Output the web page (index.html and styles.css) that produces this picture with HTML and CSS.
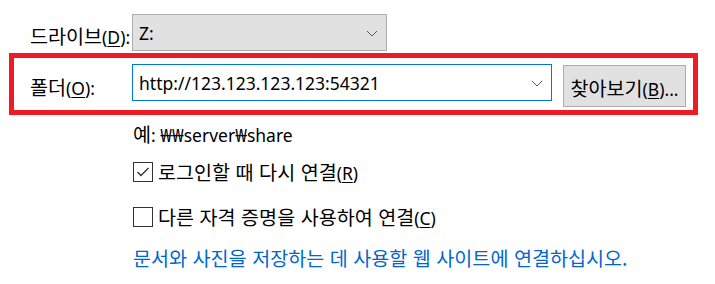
FILE: index.html
```html
<!DOCTYPE html>
<html lang="ko">
<head>
    <meta charset="UTF-8">
    <title>네트워크 드라이브 연결</title>
    <link rel="stylesheet" href="styles.css">
</head>
<body>

<div class="dialog">
    <div class="row drive-row">
        <label class="label">드라이브<span class="latin">(<u>D</u>):</span></label>
        <div class="combo drive-combo">
            <span class="latin">Z:</span>
            <svg class="chevron" width="12" height="7" viewBox="0 0 12 7"><path d="M1 1 L6 6 L11 1" fill="none" stroke="#5a5a5a" stroke-width="1"/></svg>
        </div>
    </div>

    <div class="row folder-row">
        <label class="label">폴더<span class="latin">(<u>O</u>):</span></label>
        <div class="combo folder-combo">
            <span class="latin">http://123.123.123.123:54321</span>
            <svg class="chevron" width="12" height="7" viewBox="0 0 12 7"><path d="M1 1 L6 6 L11 1" fill="none" stroke="#5a5a5a" stroke-width="1"/></svg>
        </div>
        <button class="browse-btn">찾아보기<span class="latin">(<u>B</u>)...</span></button>
    </div>

    <div class="options">
        <div class="example">예<span class="latin">: ₩₩server₩share</span></div>

        <div class="check-row">
            <span class="checkbox">
                <svg width="20" height="20" viewBox="0 0 20 20"><path d="M4.5 10 L8 13.5 L15.5 6" fill="none" stroke="#333" stroke-width="1.4"/></svg>
            </span>
            <span>로그인할 때 다시 연결<span class="latin">(<u>R</u>)</span></span>
        </div>

        <div class="check-row">
            <span class="checkbox"></span>
            <span>다른 자격 증명을 사용하여 연결<span class="latin">(<u>C</u>)</span></span>
        </div>

        <a class="link" href="#">문서와 사진을 저장하는 데 사용할 웹 사이트에 연결하십시오.</a>
    </div>
</div>

</body>
</html>
```

FILE: styles.css
```css
body {
    margin: 0;
    background-color: #fff;
    color: #000;
    font-family: "Noto Sans CJK KR", sans-serif;
    font-size: 19.6px;
    line-height: 1.2;
}
.latin {
    font-family: "Noto Sans", sans-serif;
    font-size: 17.5px;
}
.dialog {
    width: 715px;
    height: 284px;
    padding-top: 14px;
    box-sizing: border-box;
}
.row {
    display: flex;
    align-items: center;
}
.label {
    width: 102px;
    flex: none;
    white-space: nowrap;
    padding-top: 6px;
}
u {
    text-decoration-thickness: 1px;
    text-underline-offset: 2px;
}
.drive-row {
    padding-left: 30px;
}
.combo {
    display: flex;
    align-items: center;
    justify-content: space-between;
    box-sizing: border-box;
    height: 37px;
    padding: 2px 8px 0 6px;
}
.drive-combo {
    width: 255px;
    background-color: #e1e1e1;
    border: 1px solid #adadad;
}
.folder-row {
    margin: 2px 0 0 9px;
    width: 689px;
    height: 62px;
    box-sizing: border-box;
    border: 5px solid #ed1c24; /* cadre rouge */
    padding-left: 16px;
}
.folder-combo {
    width: 420px;
    border: 1px solid #0078d7;
    background-color: #fff;
    margin-top: -4px;
}
.browse-btn {
    margin-left: 11px;
    width: 123px;
    height: 42px;
    box-sizing: border-box;
    background-color: #e1e1e1;
    border: 1px solid #adadad;
    font-family: inherit;
    font-size: 19.6px;
    color: #000;
    padding: 2px 0 0 0;
    margin-top: 4px;
}
.options {
    padding-left: 133px;
}
.example {
    margin-top: 7px;
    height: 28px;
}
.check-row {
    display: flex;
    align-items: center;
    gap: 5px;
    margin-top: 10px;
}
.check-row + .check-row {
    margin-top: 21px;
}
.checkbox {
    width: 20px;
    height: 20px;
    box-sizing: border-box;
    border: 1px solid #333;
    display: flex;
    align-items: center;
    justify-content: center;
}
.checkbox svg {
    flex: none;
}
.link {
    display: block;
    margin-top: 17px;
    color: #0066cc;
    text-decoration: none;
}
```
